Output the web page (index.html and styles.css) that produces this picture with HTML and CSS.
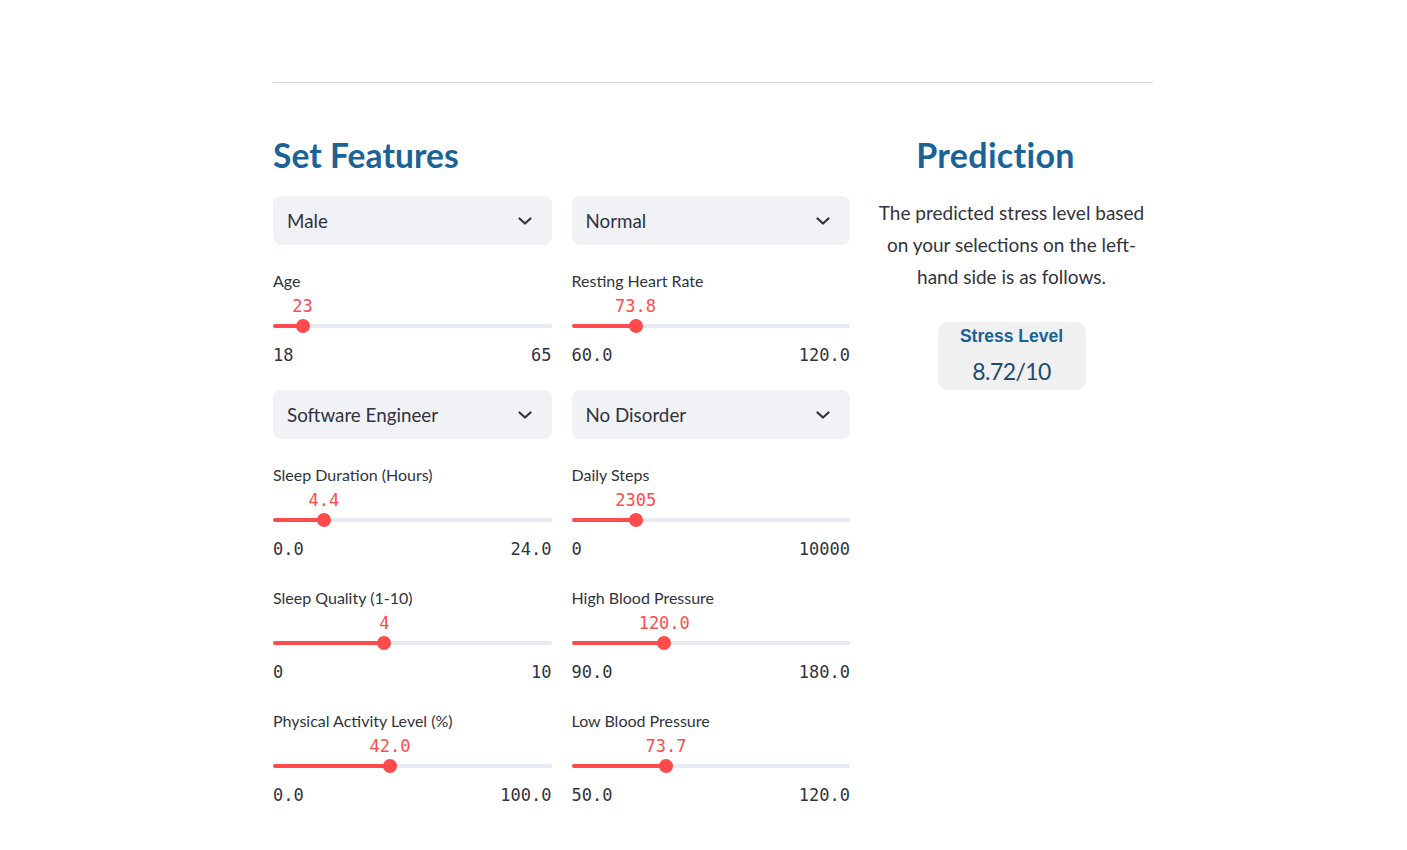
FILE: index.html
```html
<!DOCTYPE html>
<html>
<head>
<meta charset="utf-8">
<link rel="stylesheet" href="styles.css">
</head>
<body>
<main class="page">
  <hr class="divider">
  <div class="layout">
    <section class="features">
      <h2 class="heading">Set Features</h2>
      <div class="feature-grid">
        <div class="col">
          <div class="select"><span>Male</span><svg class="chev" viewBox="0 0 14 8"><path d="M1.5 1.5 L7 6.5 L12.5 1.5"/></svg></div>
          <div class="slider">
            <div class="label">Age</div>
            <div class="track-area">
              <div class="value" style="left:10.6%">23</div>
              <div class="track"><div class="fill" style="width:10.6%"></div><div class="thumb" style="left:10.6%"></div></div>
            </div>
            <div class="ticks"><span>18</span><span>65</span></div>
          </div>
          <div class="select"><span>Software Engineer</span><svg class="chev" viewBox="0 0 14 8"><path d="M1.5 1.5 L7 6.5 L12.5 1.5"/></svg></div>
          <div class="slider">
            <div class="label">Sleep Duration (Hours)</div>
            <div class="track-area">
              <div class="value" style="left:18.3%">4.4</div>
              <div class="track"><div class="fill" style="width:18.3%"></div><div class="thumb" style="left:18.3%"></div></div>
            </div>
            <div class="ticks"><span>0.0</span><span>24.0</span></div>
          </div>
          <div class="slider more">
            <div class="label">Sleep Quality (1-10)</div>
            <div class="track-area">
              <div class="value" style="left:40%">4</div>
              <div class="track"><div class="fill" style="width:40%"></div><div class="thumb" style="left:40%"></div></div>
            </div>
            <div class="ticks"><span>0</span><span>10</span></div>
          </div>
          <div class="slider more">
            <div class="label">Physical Activity Level (%)</div>
            <div class="track-area">
              <div class="value" style="left:42%">42.0</div>
              <div class="track"><div class="fill" style="width:42%"></div><div class="thumb" style="left:42%"></div></div>
            </div>
            <div class="ticks"><span>0.0</span><span>100.0</span></div>
          </div>
        </div>
        <div class="col">
          <div class="select"><span>Normal</span><svg class="chev" viewBox="0 0 14 8"><path d="M1.5 1.5 L7 6.5 L12.5 1.5"/></svg></div>
          <div class="slider">
            <div class="label">Resting Heart Rate</div>
            <div class="track-area">
              <div class="value" style="left:23%">73.8</div>
              <div class="track"><div class="fill" style="width:23%"></div><div class="thumb" style="left:23%"></div></div>
            </div>
            <div class="ticks"><span>60.0</span><span>120.0</span></div>
          </div>
          <div class="select"><span>No Disorder</span><svg class="chev" viewBox="0 0 14 8"><path d="M1.5 1.5 L7 6.5 L12.5 1.5"/></svg></div>
          <div class="slider">
            <div class="label">Daily Steps</div>
            <div class="track-area">
              <div class="value" style="left:23.05%">2305</div>
              <div class="track"><div class="fill" style="width:23.05%"></div><div class="thumb" style="left:23.05%"></div></div>
            </div>
            <div class="ticks"><span>0</span><span>10000</span></div>
          </div>
          <div class="slider more">
            <div class="label">High Blood Pressure</div>
            <div class="track-area">
              <div class="value" style="left:33.3%">120.0</div>
              <div class="track"><div class="fill" style="width:33.3%"></div><div class="thumb" style="left:33.3%"></div></div>
            </div>
            <div class="ticks"><span>90.0</span><span>180.0</span></div>
          </div>
          <div class="slider more">
            <div class="label">Low Blood Pressure</div>
            <div class="track-area">
              <div class="value" style="left:33.9%">73.7</div>
              <div class="track"><div class="fill" style="width:33.9%"></div><div class="thumb" style="left:33.9%"></div></div>
            </div>
            <div class="ticks"><span>50.0</span><span>120.0</span></div>
          </div>
        </div>
      </div>
    </section>
    <section class="prediction">
      <h2 class="heading center">Prediction</h2>
      <p class="desc">The predicted stress level based on your selections on the left-hand side is as follows.</p>
      <div class="result">
        <div class="result-title">Stress Level</div>
        <div class="result-value">8.72/10</div>
      </div>
    </section>
  </div>
</main>
</body>
</html>
```
FILE: styles.css
```css
html, body {
  margin: 0;
  padding: 0;
  background: #ffffff;
}
body {
  font-family: "Source Sans Pro", "Lato", "Noto Sans", sans-serif;
  color: #31333f;
}
.page {
  width: 880px;
  margin-left: 273px;
  padding-top: 82px;
}
.divider {
  margin: 0;
  border: none;
  border-top: 1px solid #d6d6d9;
}
.layout {
  display: grid;
  grid-template-columns: 577px 283px;
  column-gap: 20px;
  margin-top: 53px;
}
.heading {
  margin: 0;
  font-size: 33.5px;
  line-height: 38px;
  padding-bottom: 2px;
  font-weight: 700;
  color: #1b6397;
  letter-spacing: 0.1px;
}
.heading.center {
  text-align: center;
  padding-right: 32px;
  font-size: 34px;
  letter-spacing: 0.3px;
}
.feature-grid {
  display: grid;
  grid-template-columns: 1fr 1fr;
  column-gap: 20px;
  margin-top: 20px;
}
.col {
  display: flex;
  flex-direction: column;
  gap: 24px;
}
.select {
  height: 49px;
  box-sizing: border-box;
  background: #f0f2f6;
  border-radius: 8px;
  display: flex;
  align-items: center;
  justify-content: space-between;
  padding: 0 20px 0 14px;
  font-size: 18.8px;
}
.select + .slider {
  margin-top: 1px;
}
.slider + .select {
  margin-top: 1px;
}
.chev {
  width: 14px;
  height: 8px;
  fill: none;
  stroke: #31333f;
  stroke-width: 2.2;
  stroke-linecap: round;
  stroke-linejoin: round;
}
.slider {
  display: flex;
  flex-direction: column;
}
.slider.more {
  margin-top: 4px;
}
.label {
  height: 22px;
  line-height: 21px;
  font-size: 16px;
}
.track-area {
  position: relative;
  height: 53px;
}
.value {
  position: absolute;
  top: 4px;
  transform: translateX(-50%);
  font-family: "DejaVu Sans Mono", "Liberation Mono", monospace;
  font-size: 17px;
  line-height: 20px;
  color: #ff4b4b;
  white-space: nowrap;
}
.track {
  position: absolute;
  left: 0;
  right: 0;
  top: 32px;
  height: 4px;
  border-radius: 2px;
  background: #e6eaf1;
}
.fill {
  height: 4px;
  border-radius: 2px;
  background: #ff4b4b;
}
.thumb {
  position: absolute;
  top: -5px;
  width: 14px;
  height: 14px;
  margin-left: -7px;
  border-radius: 50%;
  background: #ff4b4b;
}
.ticks {
  display: flex;
  justify-content: space-between;
  height: 20px;
  line-height: 20px;
  font-family: "DejaVu Sans Mono", "Liberation Mono", monospace;
  font-size: 17px;
  color: #31333f;
}
.prediction {
  display: flex;
  flex-direction: column;
  align-items: center;
}
.prediction .heading {
  align-self: stretch;
}
.desc {
  margin: 21px 0 0 0;
  text-align: center;
  font-size: 19px;
  line-height: 32px;
  padding: 0 2px;
}
.result {
  margin-top: 29px;
  width: 148px;
  height: 68px;
  box-sizing: border-box;
  background: #f0f0f0;
  border-radius: 10px;
  display: flex;
  flex-direction: column;
  align-items: center;
  padding-top: 3px;
}
.result-title {
  font-family: "Liberation Sans", Arial, sans-serif;
  font-weight: 700;
  font-size: 17.5px;
  line-height: 22px;
  color: #1b6397;
}
.result-value {
  margin-top: 10px;
  font-size: 23px;
  line-height: 28px;
  letter-spacing: -0.6px;
  color: #1f4a6e;
}
```
